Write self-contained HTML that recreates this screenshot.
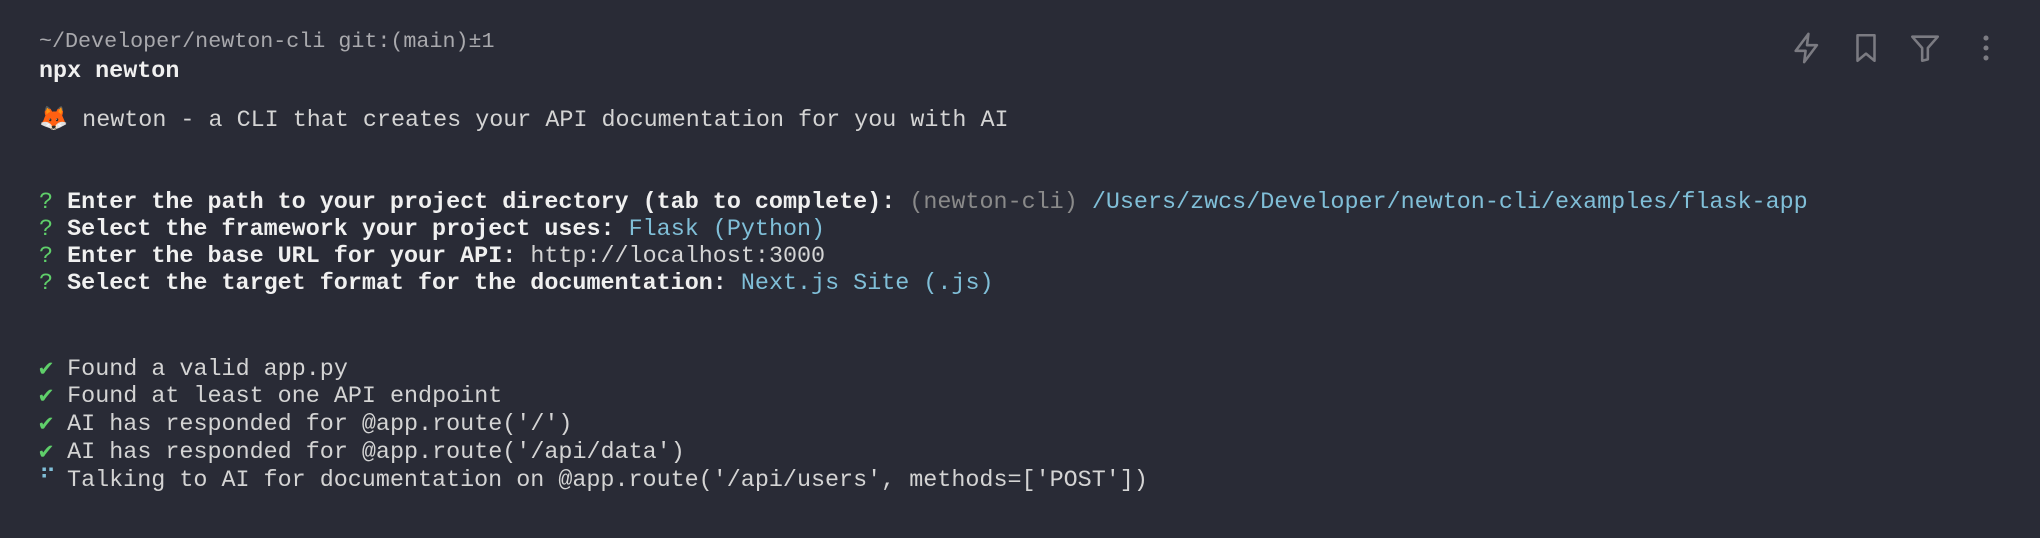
<!DOCTYPE html>
<html><head><meta charset="utf-8"><style>
html,body{margin:0;padding:0;background:#292b36;width:2040px;height:538px;overflow:hidden}
.l{position:absolute;left:39px;font-family:"Liberation Mono",monospace;font-size:23.4px;line-height:28px;white-space:pre;color:#d4d4d4}
.b{font-weight:bold;color:#f0f0f0}
.g{color:#5fcf6a}
.c{color:#80bfd8}
.d{color:#8a8a8a}
.ic{position:absolute;top:31px}
.sp{display:inline-block;width:14px;overflow:hidden;vertical-align:top}
</style></head><body>
<div class="l" style="top:28px;color:#a9a9ad;font-size:21.7px">~/Developer/newton-cli git:(main)±1</div>
<div class="l b" style="top:58px">npx newton</div>
<div class="l" style="top:104px"><span style="font-family:'Noto Color Emoji','DejaVu Sans',sans-serif">🦊</span> newton - a CLI that creates your API documentation for you with AI</div>
<div class="l" style="top:189px"><span class="g">?</span> <span class="b">Enter the path to your project directory (tab to complete):</span> <span class="d">(newton-cli)</span> <span class="c">/Users/zwcs/Developer/newton-cli/examples/flask-app</span></div>
<div class="l" style="top:216px"><span class="g">?</span> <span class="b">Select the framework your project uses:</span> <span class="c">Flask (Python)</span></div>
<div class="l" style="top:243px"><span class="g">?</span> <span class="b">Enter the base URL for your API:</span> http://localhost:3000</div>
<div class="l" style="top:270px"><span class="g">?</span> <span class="b">Select the target format for the documentation:</span> <span class="c">Next.js Site (.js)</span></div>
<div class="l" style="top:356px"><span class="g">✔</span> Found a valid app.py</div>
<div class="l" style="top:383px"><span class="g">✔</span> Found at least one API endpoint</div>
<div class="l" style="top:411px"><span class="g">✔</span> AI has responded for @app.route('/')</div>
<div class="l" style="top:439px"><span class="g">✔</span> AI has responded for @app.route('/api/data')</div>
<div class="l" style="top:467px"><span class="c sp">⠋</span> Talking to AI for documentation on @app.route('/api/users', methods=['POST'])</div>
<svg class="ic" style="left:1790px" width="34" height="34" viewBox="0 0 24 24" fill="none" stroke="#7b7b82" stroke-width="1.8" stroke-linejoin="round"><path d="M13 2L4 14h7l-1 8 9-12h-7z"/></svg>
<svg class="ic" style="left:1849px" width="34" height="34" viewBox="0 0 24 24" fill="none" stroke="#7b7b82" stroke-width="1.8" stroke-linejoin="round"><path d="M6 3h12v18l-6-5-6 5z"/></svg>
<svg class="ic" style="left:1908px" width="34" height="34" viewBox="0 0 24 24" fill="none" stroke="#7b7b82" stroke-width="1.8" stroke-linejoin="round"><path d="M3 4h18l-7 8v8l-4 1v-9z"/></svg>
<svg class="ic" style="left:1969px" width="34" height="34" viewBox="0 0 24 24" fill="#7b7b82"><circle cx="12" cy="5" r="1.8"/><circle cx="12" cy="12" r="1.8"/><circle cx="12" cy="19" r="1.8"/></svg>
</body></html>
